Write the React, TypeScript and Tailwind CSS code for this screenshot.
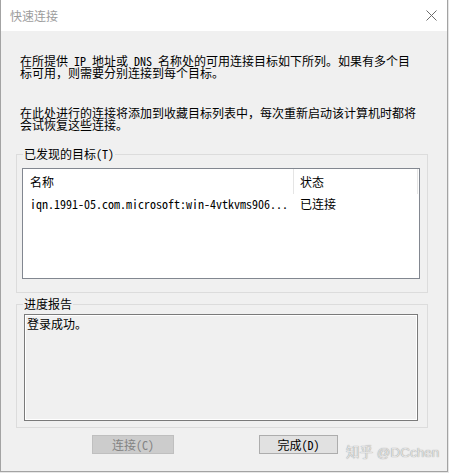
const FONT = "font-['Noto_Sans_Mono_CJK_SC','Noto_Sans_CJK_SC',sans-serif]";

function GroupBox({ label, className, children }: { label: string; className: string; children: React.ReactNode }) {
  return (
    <div className={`relative ml-[15px] w-[412px] border border-[#dcdcdc] ${className}`}>
      {/* 테두리 위에 걸친 라벨 */}
      <span className="absolute -top-[7px] left-[6px] bg-[#f0f0f0] px-[1px] text-[12px] leading-[12px] text-black">
        {label}
      </span>
      {children}
    </div>
  );
}

export default function App() {
  return (
    <div className={`w-[449px] h-[473px] bg-[#e6e6e6] ${FONT}`}>
      <div className="relative w-[448px] h-[472px] flex flex-col border-x border-b border-[#a3a3a3] bg-[#f0f0f0]">
        {/* title bar */}
        <div className="h-[31px] shrink-0 bg-white flex items-center justify-between pl-[9px] pr-[9px]">
          <span className="text-[12px] leading-[12px] text-[#9c9c9c] font-['Noto_Sans_CJK_SC',sans-serif]">快速连接</span>
          <svg width="11" height="11" viewBox="0 0 11 11" className="mr-[1px]">
            <path d="M0.5 0.5 L10.5 10.5 M10.5 0.5 L0.5 10.5" stroke="#6b6b6b" strokeWidth="1" fill="none" />
          </svg>
        </div>

        <div className="flex-1 flex flex-col text-[12px] leading-[12px] text-black">
          <div className="pl-[19px] pt-[24px] whitespace-nowrap">
            <div>在所提供 IP 地址或 DNS 名称处的可用连接目标如下所列。如果有多个目</div>
            <div>标可用，则需要分别连接到每个目标。</div>
          </div>
          <div className="pl-[19px] mt-[28px] whitespace-nowrap">
            <div>在此处进行的连接将添加到收藏目标列表中，每次重新启动该计算机时都将</div>
            <div>会试恢复这些连接。</div>
          </div>

          <GroupBox label="已发现的目标(T)" className="mt-[23px] h-[139px]">
            <div className="ml-[5px] mt-[13px] w-[398px] h-[111px] border border-[#828790] bg-white">
              <div className="flex h-[25px]">
                <div className="w-[270px] pl-[7px] flex items-center">名称</div>
                <div className="w-px h-[25px] bg-[#e5e5e5]" />
                <div className="w-[123px] pl-[6px] flex items-center">状态</div>
                <div className="w-px h-[25px] bg-[#e5e5e5]" />
              </div>
              <div className="flex h-[18px] items-center mt-[1px]">
                <div className="w-[271px] pl-[7px] whitespace-nowrap">iqn.1991-05.com.microsoft:win-4vtkvms906...</div>
                <div className="pl-[6px]">已连接</div>
              </div>
            </div>
          </GroupBox>

          <GroupBox label="进度报告" className="mt-[11px] h-[124px]">
            <div className="ml-[7px] mt-[9px] w-[394px] h-[107px] border border-[#7a7a7a] shadow-[inset_0_0_0_1px_#ffffff] bg-[#f0f0f0] pl-[2px] pt-[3px]">
              登录成功。
            </div>
          </GroupBox>

          <div className="flex mt-[7px]">
            <button
              disabled
              className="ml-[91px] w-[82px] h-[19px] bg-[#cccccc] border border-[#bfbfbf] text-[#838383] text-[12px] leading-[12px]"
            >
              连接(C)
            </button>
            <button className="ml-[85px] w-[79px] h-[19px] bg-[#e1e1e1] border border-[#adadad] text-black text-[12px] leading-[12px]">
              完成(D)
            </button>
          </div>
        </div>

        {/* watermark */}
        <span className="absolute left-[345px] top-[444px] text-[13.5px] leading-[18px] text-[#e4e4e4] font-['Liberation_Sans','Noto_Sans_CJK_SC',sans-serif] [text-shadow:0_0_1px_#7a7a7a] whitespace-nowrap">
          知乎 @DCchen
        </span>
      </div>
    </div>
  );
}
